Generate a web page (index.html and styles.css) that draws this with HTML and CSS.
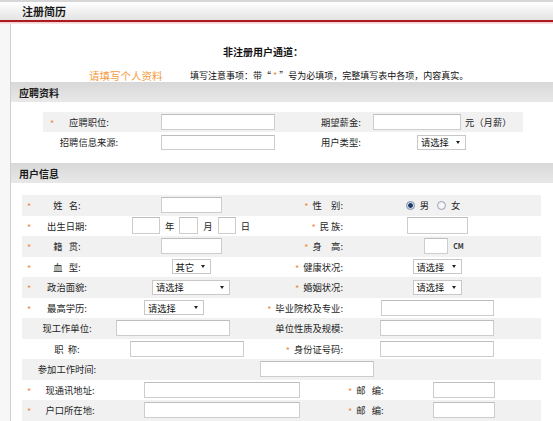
FILE: index.html
```html
<!DOCTYPE html>
<html lang="zh-CN">
<head>
<meta charset="utf-8">
<title>注册简历</title>
<link rel="stylesheet" href="styles.css">
</head>
<body>
<div class="topline"></div>
<header class="header"><h1 class="header-title">注册简历</h1></header>
<div class="redline"></div>
<div class="page">
  <div class="gutter"></div>
  <main class="content">
    <h2 class="channel">非注册用户通道：</h2>
    <div class="intro">
      <span class="intro-title">请填写个人资料</span>
      <span class="intro-note">填写注意事项：带“ <span class="star">*</span> ”号为必填项，完整填写表中各项，内容真实。</span>
    </div>

    <div class="band">应聘资料</div>
    <div class="jobrows">
      <div class="jrow shade">
        <span class="star c1">*</span>
        <span class="jlabel">应聘职位:</span>
        <span class="input jfield"></span>
        <span class="jlabel2">期望薪金:</span>
        <span class="jfield2"><span class="input w88"></span><span class="unit">元（月薪）</span></span>
      </div>
      <div class="jrow">
        <span class="jlabel">招聘信息来源:</span>
        <span class="input jfield h15"></span>
        <span class="jlabel2">用户类型:</span>
        <span class="select w49 jselect">请选择</span>
      </div>
    </div>

    <div class="band band2">用户信息</div>
    <div class="userrows">
      <div class="urow shade">
        <span class="star ca">*</span>
        <span class="ulabel">姓&nbsp;&nbsp;&nbsp;名:</span>
        <span class="input w61 cfield"></span>
        <span class="rlabel"><span class="star">*</span>性　别:</span>
        <span class="rfield radios">
          <span class="radio on"></span><span class="rtext">男</span>
          <span class="radio"></span><span class="rtext">女</span>
        </span>
      </div>
      <div class="urow">
        <span class="star ca">*</span>
        <span class="ulabel">出生日期:</span>
        <span class="cfield dategroup">
          <span class="input w28 h17"></span><span>年</span>
          <span class="input w19 h17"></span><span>月</span>
          <span class="input w18 h17"></span><span>日</span>
        </span>
        <span class="rlabel"><span class="star">*</span>民 族:</span>
        <span class="input w61 h17 rfield"></span>
      </div>
      <div class="urow shade">
        <span class="star ca">*</span>
        <span class="ulabel">籍&nbsp;&nbsp;&nbsp;贯:</span>
        <span class="input w61 cfield"></span>
        <span class="rlabel"><span class="star">*</span>身　高:</span>
        <span class="rfield heightgroup"><span class="input w24"></span><span class="cm">CM</span></span>
      </div>
      <div class="urow">
        <span class="star ca">*</span>
        <span class="ulabel">血&nbsp;&nbsp;&nbsp;型:</span>
        <span class="select w39 cfield">其它</span>
        <span class="rlabel"><span class="star">*</span>健康状况:</span>
        <span class="select w49 rfield">请选择</span>
      </div>
      <div class="urow shade">
        <span class="star ca">*</span>
        <span class="ulabel">政治面貌:</span>
        <span class="select w78 cfield">请选择</span>
        <span class="rlabel"><span class="star">*</span>婚姻状况:</span>
        <span class="select w49 rfield">请选择</span>
      </div>
      <div class="urow">
        <span class="star ca">*</span>
        <span class="ulabel">最高学历:</span>
        <span class="select w60 cfield edu-select">请选择</span>
        <span class="rlabel"><span class="star">*</span>毕业院校及专业:</span>
        <span class="input w113 rfield"></span>
      </div>
      <div class="urow shade">
        <span class="ulabel">现工作单位:</span>
        <span class="input w114 cfield work-input"></span>
        <span class="rlabel">单位性质及规模:</span>
        <span class="input w114 rfield"></span>
      </div>
      <div class="urow">
        <span class="ulabel">职&nbsp;&nbsp;称:</span>
        <span class="input w114 cfield title-input"></span>
        <span class="rlabel"><span class="star">*</span>身份证号码:</span>
        <span class="input w114 rfield"></span>
      </div>
      <div class="urow shade">
        <span class="ulabel">参加工作时间:</span>
        <span class="input w114 worktime-input"></span>
      </div>
      <div class="urow">
        <span class="star ca">*</span>
        <span class="ulabel addr-label">现通讯地址:</span>
        <span class="input w156 addr-input"></span>
        <span class="zipgroup"><span class="star">*</span><span class="ziplabel">邮&nbsp;&nbsp;&nbsp;编:</span><span class="input w62"></span></span>
      </div>
      <div class="urow shade">
        <span class="star ca">*</span>
        <span class="ulabel addr-label">户口所在地:</span>
        <span class="input w156 addr-input"></span>
        <span class="zipgroup"><span class="star">*</span><span class="ziplabel">邮&nbsp;&nbsp;&nbsp;编:</span><span class="input w62"></span></span>
      </div>
    </div>
  </main>
</div>
</body>
</html>
```

FILE: styles.css
```css
* { box-sizing: border-box; }
html, body { margin: 0; padding: 0; }
body {
  width: 553px;
  height: 421px;
  overflow: hidden;
  background: #fff;
  font-family: "Noto Sans CJK SC", "Noto Sans", sans-serif;
  font-size: 9.3px;
  color: #1e1e1e;
}

.topline { height: 2px; background: #d6d6d6; }
.header {
  height: 18px;
  background: linear-gradient(#ffffff, #e3e3e3);
  display: flex;
  align-items: center;
  padding-left: 22px;
}
.header-title { margin: 0; font-size: 11px; font-weight: bold; color: #1a1a1a; line-height: 1; }
.redline {
  height: 4px;
  border-top: 2px solid #ad1a20;
  background: linear-gradient(#f0c6c6, #fbeeee);
}

.page { display: flex; height: 397px; }
.gutter { width: 11px; flex: none; background: #f7f7f7; border-right: 1px solid #d0d0d0; }
.content { flex: 1; min-width: 0; }

.channel {
  margin: 21px 0 0;
  padding-left: 212px;
  font-size: 10px;
  font-weight: bold;
  line-height: 14px;
  color: #111;
}
.intro {
  margin-top: 9px;
  height: 14px;
  display: flex;
  align-items: center;
  padding-left: 78px;
  white-space: nowrap;
}
.intro-title { color: #f59a3c; font-size: 10.5px; width: 101px; flex: none; }
.intro-note { font-size: 9px; color: #111; }
.intro-note .star { padding-top: 0; }

.band {
  height: 20px;
  background: linear-gradient(#d8d8d8, #e8e8e8);
  font-weight: bold;
  font-size: 10px;
  color: #1a1a1a;
  padding-left: 8px;
  display: flex;
  align-items: center;
}
.band2 { margin-top: 11px; }

.star { color: #f08a3e; font-size: 9px; line-height: 1; padding-top: 3px; }

.input {
  display: block;
  height: 16px;
  background: #fff;
  border: 1px solid #cdcdcd;
  border-top-color: #bdbdbd;
}
.h15 { height: 15px; }
.h17 { height: 17px; }
.w18 { width: 18px; }
.w19 { width: 19px; }
.w24 { width: 24px; }
.w28 { width: 28px; }
.w39 { width: 39px; }
.w49 { width: 49px; }
.w60 { width: 60px; }
.w61 { width: 61px; }
.w62 { width: 62px; }
.w78 { width: 78px; }
.w88 { width: 88px; }
.w113 { width: 113px; }
.w114 { width: 114px; }
.w156 { width: 156px; }

.select {
  display: flex;
  align-items: center;
  justify-content: space-between;
  height: 15px;
  background: #fff;
  border: 1px solid #c8c8c8;
  padding: 0 5px 0 3px;
  color: #111;
  white-space: nowrap;
}
.select::after {
  content: "";
  border-left: 2.5px solid transparent;
  border-right: 2.5px solid transparent;
  border-top: 3px solid #222;
}

/* 应聘资料 rows */
.jobrows { margin: 10px 0 0 32px; width: 480px; }
.jrow {
  height: 20px;
  display: grid;
  grid-template-columns: 18px 56px 44px 114px 46px 52px 1fr;
  align-items: center;
  white-space: nowrap;
}
.shade { background: #f1f1f1; }
.c1 { grid-column: 1; justify-self: center; }
.jlabel { grid-column: 2; justify-self: center; }
.jfield { grid-column: 4; width: 114px; }
.jlabel2 { grid-column: 6; }
.jfield2 { grid-column: 7; display: flex; align-items: center; }
.unit { margin-left: 4px; }
.jselect { grid-column: 7; margin-left: 44px; }

/* 用户信息 rows */
.userrows { margin: 12px 0 0 11px; width: 519px; }
.urow {
  height: 20.5px;
  display: grid;
  grid-template-columns: 14px 62px 186px 59px 188px 1fr;
  align-items: center;
  white-space: nowrap;
}
.ca { grid-column: 1; justify-self: center; }
.ulabel { grid-column: 2; justify-self: center; }
.cfield { grid-column: 3; justify-self: center; }
.rlabel {
  grid-column: 4;
  display: flex;
  align-items: center;
  justify-content: flex-end;
}
.rlabel .star { margin-right: 4px; }
.rfield { grid-column: 5; justify-self: center; }

.dategroup { display: flex; align-items: center; gap: 5px; }
.heightgroup { display: flex; align-items: center; padding-left: 14px; }
.cm { font-size: 7px; font-weight: bold; margin-left: 5px; color: #333; }

.radios { display: flex; align-items: center; }
.radio {
  width: 9px;
  height: 9px;
  border-radius: 50%;
  border: 1px solid #98a4b2;
  background: radial-gradient(circle, #ffffff 0, #e4e7ec 100%);
}
.radio.on {
  border-color: #7d8fa6;
  background: radial-gradient(circle, #1d3c68 0, #1d3c68 2px, #c9d4e2 2.6px, #eef2f6 100%);
}
.rtext { margin: 0 8px 0 5px; }

.edu-select { justify-self: start; margin-left: 46px; }
.work-input { justify-self: start; margin-left: 18px; }
.title-input { justify-self: start; margin-left: 32px; }
.worktime-input { grid-column: 3 / 6; justify-self: start; margin-left: 162px; }
.addr-label { margin-left: 6px; }
.addr-input { grid-column: 3 / 5; justify-self: start; margin-left: 46px; }
.zipgroup { grid-column: 5; justify-self: start; display: flex; align-items: center; padding-left: 5px; }
.ziplabel { margin-left: 4px; width: 77px; }
```
